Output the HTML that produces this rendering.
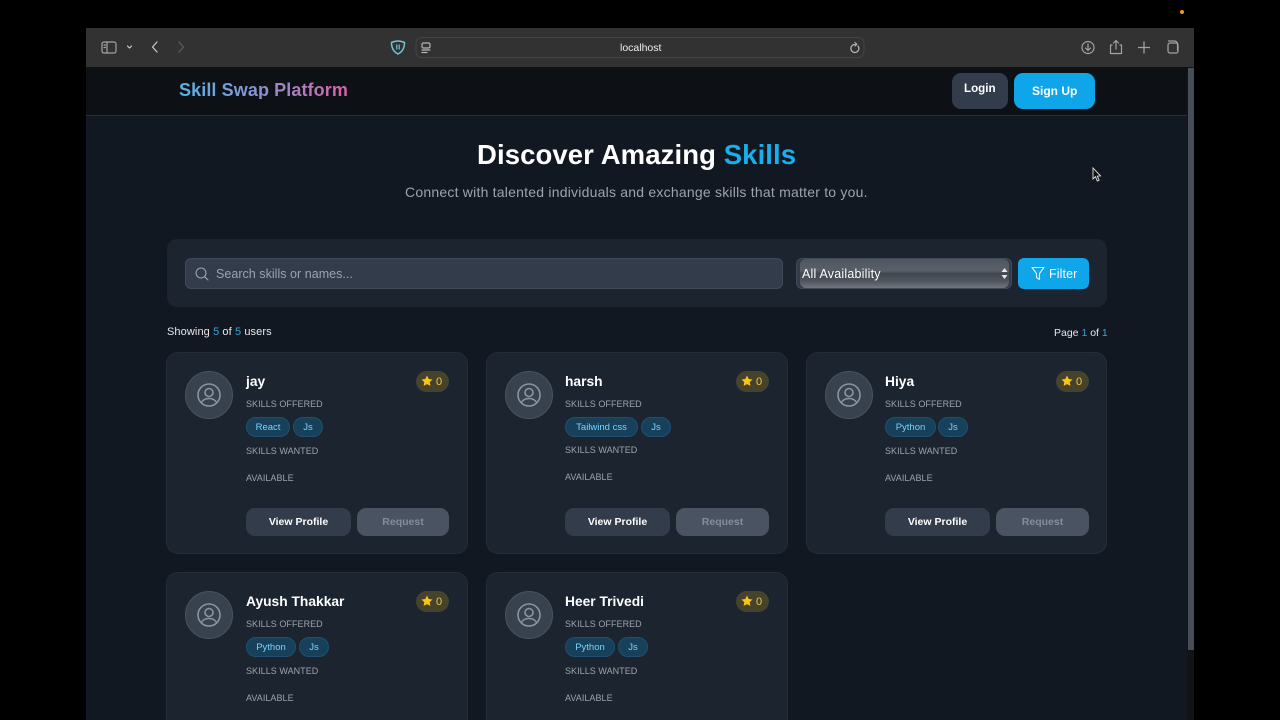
<!DOCTYPE html>
<html>
<head>
<meta charset="utf-8">
<style>
html,body{margin:0;padding:0;background:#000;width:1280px;height:720px;overflow:hidden}
body{font-family:"Liberation Sans",sans-serif;position:relative;color:#fff}
div,span,svg{position:absolute;box-sizing:border-box}
.t{white-space:nowrap;line-height:1}
span.i{position:static}
.card{width:302px;height:202px;background:#1c2430;border:1px solid #242c38;border-radius:12px}
.cut{height:148px;border-bottom:0;border-radius:12px 12px 0 0}
.av{left:18px;top:18px;width:48px;height:48px;border-radius:50%;background:#38414e;border:1px solid #4a5361}
.name{left:78px;top:22px;font-size:13.8px;font-weight:bold;color:#fff}
.rate{left:249px;top:18px;width:33px;height:21px;border-radius:11px;background:#45432c}
.lab{left:78px;font-size:9px;color:#9ca3af;letter-spacing:.05px}
.tag{top:64px;height:20px;border-radius:10px;background:#17405a;border:1px solid #1f5070;color:#7dd3fc;font-size:9.5px;line-height:19px;text-align:center;white-space:nowrap}
.btn{top:155px;height:28px;border-radius:9px;font-size:10.5px;font-weight:bold;text-align:center;line-height:28px;white-space:nowrap}
.vp{left:78px;width:105px;background:#323c4b;color:#fff}
.rq{left:189px;width:93px;background:#4a5361;color:#858d99}
</style>
</head>
<body>
<div style="left:1180px;top:10px;width:4px;height:4px;border-radius:50%;background:#e8963a"></div>

<!-- browser toolbar -->
<div style="left:86px;top:28px;width:1108px;height:39px;background:#323232"></div>
<svg style="left:86px;top:28px" width="1108" height="39" viewBox="0 0 1108 39" fill="none" stroke="#a3a3a3" stroke-width="1.2" stroke-linecap="round" stroke-linejoin="round">
  <rect x="16" y="14" width="14" height="11" rx="2"/><path d="M21 14v11M18 17h1.500M18 19.500h1.500"/>
  <path d="M41.500 18l2 2 2-2" stroke="#ccc"/>
  <path d="M72 14l-4.500 5 4.500 5" stroke="#c8c8c8" stroke-width="1.300" transform="translate(-1 0)"/>
  <path d="M93 14l4.500 5-4.500 5" stroke="#5c5c5c" stroke-width="1.300"/>
  <g transform="translate(-7 0)">
  <path d="M312.500 14.500c2-.8 4-1.500 6.500-1.500s4.500.7 6.500 1.500c0 5-1.500 9-6.500 11.500-5-2.500-6.500-6.500-6.500-11.500z" stroke="#6cc5d8" stroke-width="1.500"/>
  <path d="M317.800 17v4M320.200 17v4" stroke="#6cc5d8"/>
  </g>
  <rect x="330" y="9.500" width="448" height="20" rx="6" stroke="#444" stroke-width="1"/>
  <rect x="336" y="15" width="8" height="5" rx="1.500" stroke="#b5b5b5"/><path d="M336 22h8M336 24.500h5" stroke="#b5b5b5"/>
  <path d="M772 17.500a4 4 0 1 1-3-1.500M769 14l1.800 1.800L769 17.500" stroke="#b5b5b5" transform="translate(0 .5)"/>
  <circle cx="1002" cy="19.500" r="6"/><path d="M1002 16v6.500M999.500 20l2.500 2.500 2.500-2.500"/>
  <path d="M1026 17h-1.500v8.500h11V17H1034M1030 21V12.500M1027.500 15l2.500-2.500 2.500 2.500"/>
  <path d="M1058 14v11M1052.500 19.500h11" stroke-width="1.300"/>
  <rect x="1082" y="15" width="10" height="10" rx="2"/><path d="M1085 13h6a3 3 0 0 1 3 3v6" transform="translate(-2.500 0)"/>
</svg>
<div class="t" style="left:620px;top:43px;font-size:10.5px;color:#eee">localhost</div>

<!-- page -->
<div style="left:86px;top:67px;width:1101px;height:653px;background:#111822;overflow:hidden">
  <div style="left:0;top:0;width:1101px;height:49px;background:#0d1014;border-bottom:1px solid #2a3038"></div>
</div>
<div style="left:1187px;top:67px;width:7px;height:653px;background:#111317"></div>
<div style="left:1188px;top:68px;width:6px;height:582px;background:#474e58"></div>

<div class="t" style="left:179px;top:81px;font-size:18px;font-weight:bold;letter-spacing:.1px;background:linear-gradient(90deg,#56b4e8,#8f8fd0 50%,#d762a6);-webkit-background-clip:text;background-clip:text;color:transparent">Skill Swap Platform</div>
<div style="left:952px;top:73px;width:56px;height:36px;border-radius:9px;background:#323c4b"></div>
<div class="t" style="left:964px;top:83px;font-size:11.6px;font-weight:bold;color:#fff">Login</div>
<div style="left:1014px;top:73px;width:81px;height:36px;border-radius:9px;background:#0ea5e9"></div>
<div class="t" style="left:1032px;top:85px;font-size:12px;font-weight:bold;color:#fff">Sign Up</div>

<div class="t" style="left:477px;top:141px;font-size:27.5px;font-weight:bold;color:#fff;letter-spacing:.1px">Discover Amazing <span class="i" style="color:#19aeec">Skills</span></div>
<div class="t" style="left:405px;top:185px;font-size:14px;color:#9ca3af;letter-spacing:.22px">Connect with talented individuals and exchange skills that matter to you.</div>

<!-- search panel -->
<div style="left:167px;top:239px;width:940px;height:68px;border-radius:10px;background:#1c2430"></div>
<div style="left:185px;top:258px;width:598px;height:31px;border-radius:6px;background:#323c4b;border:1px solid #3f4957"></div>
<svg style="left:194px;top:266px" width="16" height="16" viewBox="0 0 16 16" fill="none" stroke="#9ca3af" stroke-width="1.100" stroke-linecap="round"><circle cx="7" cy="7" r="5"/><path d="M10.800 10.800l3.200 3.200"/></svg>
<div class="t" style="left:216px;top:268px;font-size:12.5px;color:#9ca3af;letter-spacing:.03px">Search skills or names...</div>
<div style="left:796px;top:258px;width:216px;height:31px;border-radius:6px;background:#323c4b;border:1px solid #3f4957"></div>
<div style="left:800px;top:259px;width:209px;height:29px;border-radius:6px;background:linear-gradient(180deg,#4f5660 0%,#5a606a 40%,#41474f 50%,#4e545d 75%,#70757e 100%)"></div>
<div class="t" style="left:802px;top:268px;font-size:12.5px;color:#fff;letter-spacing:.2px">All Availability</div>
<svg style="left:1001px;top:268px" width="7" height="11" viewBox="0 0 7 11" fill="#e8e8e8"><path d="M3.500 0l3 4h-6zM3.500 11l3-4h-6z"/></svg>
<div style="left:1018px;top:258px;width:71px;height:31px;border-radius:6px;background:#0ea5e9"></div>
<svg style="left:1031px;top:266px" width="14" height="15" viewBox="0 0 14 15" fill="none" stroke="#e6f6fe" stroke-width="1.100" stroke-linejoin="round"><path d="M1 1.500h12L8.500 7.500v6l-3-2V7.500z"/></svg>
<div class="t" style="left:1049px;top:268px;font-size:12.5px;color:#fff;letter-spacing:.1px">Filter</div>

<div class="t" style="left:167px;top:327px;font-size:11px;color:#e5e7eb;letter-spacing:.1px">Showing <span class="i" style="color:#38a3d6">5</span> of <span class="i" style="color:#38a3d6">5</span> users</div>
<div class="t" style="left:1054px;top:328px;font-size:10.5px;color:#e5e7eb">Page <span class="i" style="color:#38a3d6">1</span> of <span class="i" style="color:#38a3d6">1</span></div>

<svg width="0" height="0" style="left:0;top:0">
  <defs>
    <g id="user" fill="none" stroke="#8b94a1" stroke-width="1.600"><circle cx="12" cy="12" r="11"/><circle cx="12" cy="9.500" r="4"/><path d="M4.500 19.500c1.500-3 4-4 7.500-4s6 1 7.500 4" stroke-linecap="round"/></g>
    <path id="star" fill="#fcc419" d="M6 .5l1.700 3.500 3.800.5-2.800 2.600.7 3.800L6 9.100l-3.400 1.800.7-3.800L.5 4.500l3.800-.5z"/>
  </defs>
</svg>

<!-- card 1 -->
<div class="card" style="left:166px;top:352px">
  <div class="av"></div><svg style="left:30px;top:30px" width="24" height="24" viewBox="0 0 24 24"><use href="#user"/></svg>
  <div class="t name" style="left:79px">jay</div>
  <div class="rate"></div><svg style="left:254px;top:22px" width="12" height="12" viewBox="0 0 12 12"><use href="#star"/></svg><div class="t" style="left:269px;top:24px;font-size:11px;color:#e8c94a">0</div>
  <div class="t lab" style="left:79px;top:47px">SKILLS OFFERED</div>
  <div class="tag" style="left:79px;width:44px">React</div><div class="tag" style="left:126px;width:30px">Js</div>
  <div class="t lab" style="left:79px;top:94px">SKILLS WANTED</div>
  <div class="t lab" style="left:79px;top:121px">AVAILABLE</div>
  <div class="btn vp" style="left:79px">View Profile</div><div class="btn rq" style="left:190px;width:92px">Request</div>
</div>
<!-- card 2 -->
<div class="card" style="left:486px;top:352px">
  <div class="av"></div><svg style="left:30px;top:30px" width="24" height="24" viewBox="0 0 24 24"><use href="#user"/></svg>
  <div class="t name">harsh</div>
  <div class="rate"></div><svg style="left:254px;top:22px" width="12" height="12" viewBox="0 0 12 12"><use href="#star"/></svg><div class="t" style="left:269px;top:24px;font-size:11px;color:#e8c94a">0</div>
  <div class="t lab" style="top:47px">SKILLS OFFERED</div>
  <div class="tag" style="left:78px;width:73px">Tailwind css</div><div class="tag" style="left:154px;width:30px">Js</div>
  <div class="t lab" style="top:93px">SKILLS WANTED</div>
  <div class="t lab" style="top:120px">AVAILABLE</div>
  <div class="btn vp">View Profile</div><div class="btn rq">Request</div>
</div>
<!-- card 3 -->
<div class="card" style="left:806px;top:352px;width:301px">
  <div class="av"></div><svg style="left:30px;top:30px" width="24" height="24" viewBox="0 0 24 24"><use href="#user"/></svg>
  <div class="t name">Hiya</div>
  <div class="rate"></div><svg style="left:254px;top:22px" width="12" height="12" viewBox="0 0 12 12"><use href="#star"/></svg><div class="t" style="left:269px;top:24px;font-size:11px;color:#e8c94a">0</div>
  <div class="t lab" style="top:47px">SKILLS OFFERED</div>
  <div class="tag" style="left:78px;width:51px">Python</div><div class="tag" style="left:131px;width:30px">Js</div>
  <div class="t lab" style="top:94px">SKILLS WANTED</div>
  <div class="t lab" style="top:121px">AVAILABLE</div>
  <div class="btn vp">View Profile</div><div class="btn rq">Request</div>
</div>
<!-- card 4 -->
<div class="card cut" style="left:166px;top:572px">
  <div class="av"></div><svg style="left:30px;top:30px" width="24" height="24" viewBox="0 0 24 24"><use href="#user"/></svg>
  <div class="t name" style="left:79px">Ayush Thakkar</div>
  <div class="rate"></div><svg style="left:254px;top:22px" width="12" height="12" viewBox="0 0 12 12"><use href="#star"/></svg><div class="t" style="left:269px;top:24px;font-size:11px;color:#e8c94a">0</div>
  <div class="t lab" style="left:79px;top:47px">SKILLS OFFERED</div>
  <div class="tag" style="left:79px;width:50px">Python</div><div class="tag" style="left:132px;width:30px">Js</div>
  <div class="t lab" style="left:79px;top:94px">SKILLS WANTED</div>
  <div class="t lab" style="left:79px;top:121px">AVAILABLE</div>
</div>
<!-- card 5 -->
<div class="card cut" style="left:486px;top:572px">
  <div class="av"></div><svg style="left:30px;top:30px" width="24" height="24" viewBox="0 0 24 24"><use href="#user"/></svg>
  <div class="t name">Heer Trivedi</div>
  <div class="rate"></div><svg style="left:254px;top:22px" width="12" height="12" viewBox="0 0 12 12"><use href="#star"/></svg><div class="t" style="left:269px;top:24px;font-size:11px;color:#e8c94a">0</div>
  <div class="t lab" style="top:47px">SKILLS OFFERED</div>
  <div class="tag" style="left:78px;width:50px">Python</div><div class="tag" style="left:131px;width:30px">Js</div>
  <div class="t lab" style="top:94px">SKILLS WANTED</div>
  <div class="t lab" style="top:121px">AVAILABLE</div>
</div>

<!-- cursor -->
<svg style="left:1092px;top:167px" width="10" height="15" viewBox="0 0 10 15"><path d="M1 1v11l2.500-2.300L5.300 14l1.800-.8-1.800-4.100 3.200-.2z" fill="#111" stroke="#e5e5e5" stroke-width=".9"/></svg>
</body>
</html>
